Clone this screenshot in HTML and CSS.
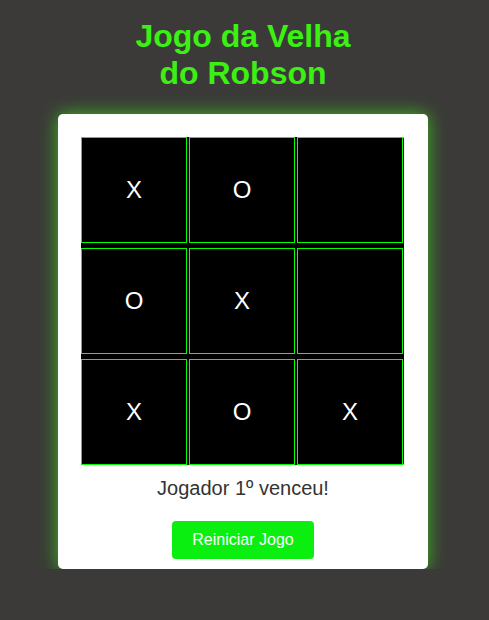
FILE: index.html
```html
<!DOCTYPE html>
<html lang="pt">
<head>
<meta charset="utf-8">
<title>Jogo da Velha do Robson</title>
<link rel="stylesheet" href="styles.css">
</head>
<body>
<div class="page">
  <h1 class="title">Jogo da Velha<br>do Robson</h1>
  <div class="card">
    <div class="board">
      <button class="cell">X</button>
      <button class="cell">O</button>
      <button class="cell"></button>
      <button class="cell">O</button>
      <button class="cell">X</button>
      <button class="cell"></button>
      <button class="cell">X</button>
      <button class="cell">O</button>
      <button class="cell">X</button>
    </div>
    <p class="status">Jogador 1º venceu!</p>
    <button class="restart">Reiniciar Jogo</button>
  </div>
</div>
</body>
</html>
```

FILE: styles.css
```css
html, body {
  margin: 0;
  padding: 0;
  background: #3b3a38;
  font-family: "Liberation Sans", Arial, sans-serif;
}

.page {
  width: 486px;
  padding-top: 18px;
  display: flex;
  flex-direction: column;
  align-items: center;
}

.title {
  margin: 0 0 22px;
  font-size: 32px;
  line-height: normal;
  font-weight: bold;
  color: #3cf014;
  text-align: center;
}

.card {
  width: 370px;
  box-sizing: border-box;
  padding: 23px 23px 10px 23px;
  background: #ffffff;
  border-radius: 5px;
  box-shadow: 0 0 18px rgba(60, 240, 20, 0.7);
  display: flex;
  flex-direction: column;
  align-items: center;
}

.board {
  align-self: flex-start;
  width: 323px;
  display: grid;
  grid-template-columns: repeat(3, 106px);
  grid-auto-rows: 106px;
  column-gap: 2px;
  row-gap: 5px;
  background: #000000;
  border-radius: 0 2px 2px 0;
}

.cell {
  margin: 0;
  padding: 0;
  border: 1px solid #00ff00;
  background: #000000;
  color: #ffffff;
  font-family: "Liberation Sans", Arial, sans-serif;
  font-size: 24px;
  display: flex;
  align-items: center;
  justify-content: center;
}

.status {
  margin: 12px 0 21px;
  font-size: 20px;
  line-height: 23px;
  color: #333333;
}

.restart {
  margin: 0;
  padding: 10px 20px;
  border: none;
  border-radius: 4px;
  background: #0aef10;
  color: #ffffff;
  font-family: "Liberation Sans", Arial, sans-serif;
  font-size: 16px;
  line-height: 18px;
}
```
